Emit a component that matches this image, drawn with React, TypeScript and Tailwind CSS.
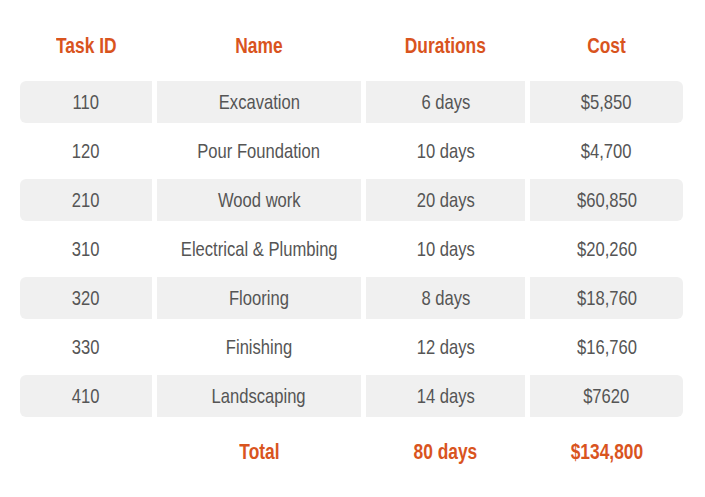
const rows = [
  { id: "110", name: "Excavation", days: "6 days", cost: "$5,850" },
  { id: "120", name: "Pour Foundation", days: "10 days", cost: "$4,700" },
  { id: "210", name: "Wood work", days: "20 days", cost: "$60,850" },
  { id: "310", name: "Electrical & Plumbing", days: "10 days", cost: "$20,260" },
  { id: "320", name: "Flooring", days: "8 days", cost: "$18,760" },
  { id: "330", name: "Finishing", days: "12 days", cost: "$16,760" },
  { id: "410", name: "Landscaping", days: "14 days", cost: "$7620" },
]

const cols = "grid grid-cols-[132px_204px_159px_153px] gap-x-[5px]"

// narrow face: Arial metrics squeezed horizontally
function T({ children }: { children: React.ReactNode }) {
  return <span className="inline-block whitespace-nowrap scale-x-[0.79]">{children}</span>
}

export default function App() {
  return (
    <div className="w-[705px] h-[497px] bg-white overflow-hidden font-['Liberation_Sans',Arial,sans-serif]">
      <div className="pl-[20px] pt-[24px]">
        <div className={`${cols} h-[42px] text-[22px] font-bold text-[#d9541e]`}>
          <div className="flex items-center justify-center"><T>Task ID</T></div>
          <div className="flex items-center justify-center"><T>Name</T></div>
          <div className="flex items-center justify-center"><T>Durations</T></div>
          <div className="flex items-center justify-center"><T>Cost</T></div>
        </div>

        <div className="mt-[15px] flex flex-col gap-y-[7px] text-[21px] text-[#555555]">
          {rows.map((r, i) => {
            const bg = i % 2 === 0 ? "bg-[#f0f0f0]" : ""
            return (
              <div key={r.id} className={`${cols} h-[42px]`}>
                <div className={`${bg} rounded-l-[6px] flex items-center justify-center`}><T>{r.id}</T></div>
                <div className={`${bg} flex items-center justify-center`}><T>{r.name}</T></div>
                <div className={`${bg} flex items-center justify-center`}><T>{r.days}</T></div>
                <div className={`${bg} rounded-r-[6px] flex items-center justify-center`}><T>{r.cost}</T></div>
              </div>
            )
          })}
        </div>

        <div className={`${cols} mt-[13px] h-[42px] text-[22px] font-bold text-[#d9541e]`}>
          <div />
          <div className="flex items-center justify-center"><T>Total</T></div>
          <div className="flex items-center justify-center"><T>80 days</T></div>
          <div className="flex items-center justify-center"><T>$134,800</T></div>
        </div>
      </div>
    </div>
  )
}
